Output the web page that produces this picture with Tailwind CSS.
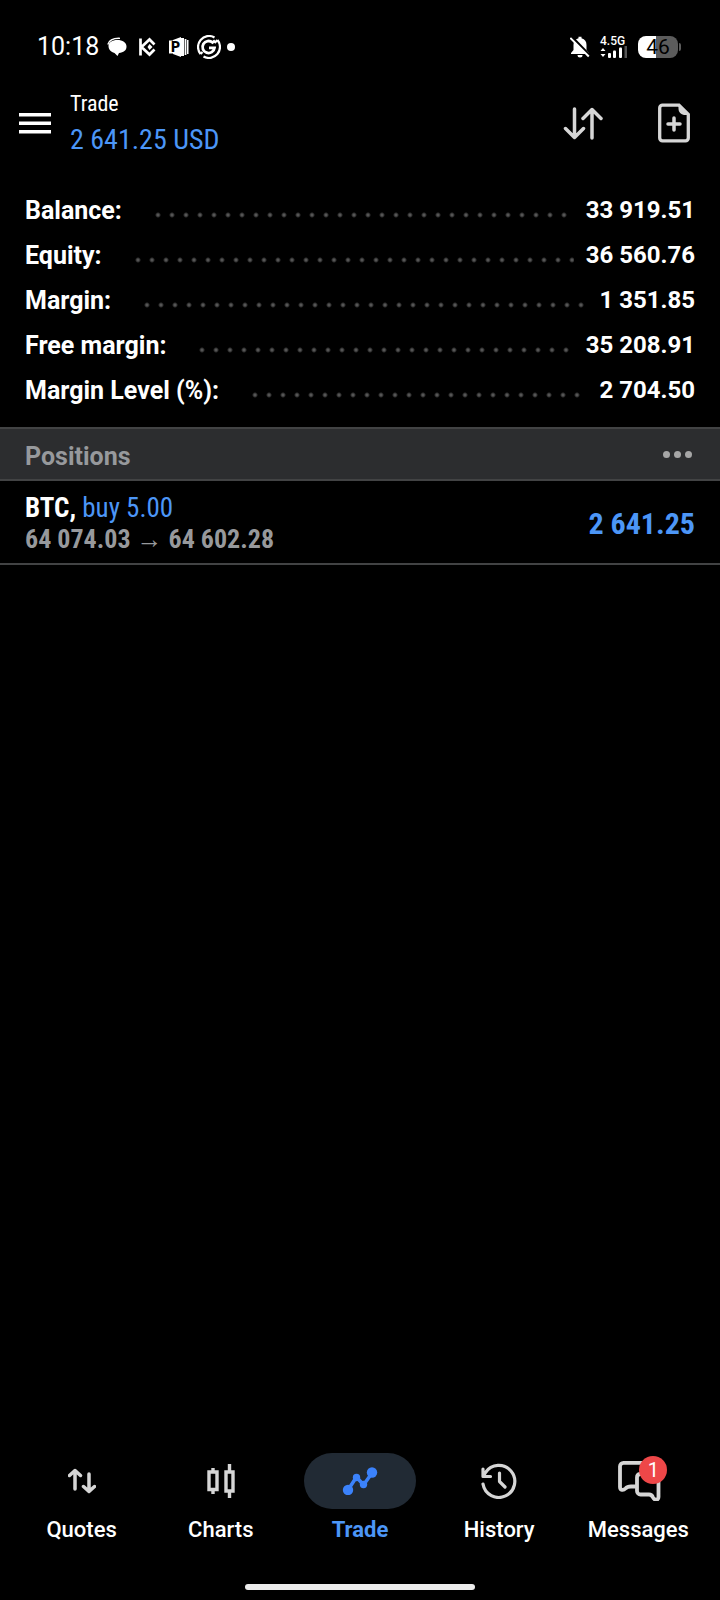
<!DOCTYPE html>
<html lang="en">
<head>
    <meta charset="UTF-8">
    <meta name="viewport" content="width=device-width, initial-scale=1.0">
    <title>Trade</title>
    <script src="https://cdn.jsdelivr.net/npm/@tailwindcss/browser@4"></script>
</head>
<body class="bg-black text-white min-h-screen flex flex-col font-['Roboto',sans-serif]">
    <!-- Status bar -->
    <div class="flex items-center justify-between pl-[37px] pr-[39px] pt-8 h-[62px]">
        <div class="flex items-center gap-2">
            <span class="text-[25px]">10:18</span>
            <svg class="w-5 h-5" viewBox="0 0 20 20">
                <path d="M10.500 3C15.500 3 19.500 5.500 19.500 9.500C19.500 13.500 16.500 15.500 12 16L10.500 19L7.500 16C4 15 1.500 12.500 1.500 9C1.500 5.500 5 3 10.500 3Z" fill="#fff"/>
                <path d="M.8 7.500C2 3.500 6 1 13 1.300" fill="none" stroke="#fff" stroke-width="1.300"/>
            </svg>
            <svg class="ml-1 w-[18px] h-5" viewBox="0 0 18 20" fill="none" stroke="#fff" stroke-width="2.700">
                <path d="M1.500 1.500V18.500M2.500 10L10.500 2.500L15.500 7.500M2.500 10L10.500 17.500L15.500 12.500"/>
                <path d="M10.500 7L13.500 10L10.500 13L8.500 10Z" fill="#fff" stroke="none"/>
            </svg>
            <svg class="ml-1 w-5 h-5" viewBox="0 0 20 20">
                <path d="M0 3.500H4V3L12 0V20L4 17V16.500H0Z" fill="#fff"/>
                <path d="M11 1H15V19H11ZM15.600 2H17.400V18H15.600ZM18 3H19.500V17H18Z" fill="#fff"/>
                <text x="2" y="15" font-family="Roboto" font-size="14" font-weight="900" fill="#000">P</text>
            </svg>
            <svg class="w-6 h-6" viewBox="0 0 24 24" fill="none" stroke="#fff" stroke-width="2.200">
                <path d="M17.500 2.500A11 11 0 0 0 3.500 19M6.500 21.500A11 11 0 0 0 20.500 5"/>
                <path d="M18 5.500L15.500 7.500A6 6 0 1 0 17.500 12.800H12" stroke-width="2.800"/>
                <path d="M20.500 5L17.500 8M3.500 19L5.500 17"/>
            </svg>
            <span class="w-2 h-2 -ml-[2px] rounded-full bg-white"></span>
        </div>
        <div class="flex items-center">
            <svg class="w-5 h-[22px]" viewBox="0 0 20 22">
                <path d="M8.500 2.200V.8H11.500V2.200C15 3 16.500 5.500 16.500 9V14L19 17V18H1V17L3.500 14V9C3.500 5.500 5 3 8.500 2.200Z" fill="#fff"/>
                <path d="M7.500 19H12.500A2.500 2.500 0 0 1 7.500 19Z" fill="#fff"/>
                <path d="M1 0L21 20.500" stroke="#000" stroke-width="2.500"/>
                <path d="M.3 2L18.800 20.500" stroke="#fff" stroke-width="2"/>
            </svg>
            <div class="ml-[10px] w-7">
                <div class="text-xs leading-[10px] font-medium">4.5G</div>
                <svg class="w-7 h-3" viewBox="0 0 28 12" fill="#fff">
                    <path d="M.5 5L3 2L5.500 5ZM.5 8L3 11L5.500 8Z"/>
                    <rect x="8" y="7" width="3" height="5" rx="1"/>
                    <rect x="13" y="4.500" width="3" height="7.500" rx="1"/>
                    <rect x="19" y="1.500" width="3" height="10.500" rx="1"/>
                    <rect x="24.500" y="0" width="2.500" height="12" fill="#555"/>
                </svg>
            </div>
            <div class="ml-[10px] w-10 h-[22px] rounded-lg bg-linear-to-r from-white from-45% to-[#5c5c5c] to-45% text-black text-[21px] leading-[23px] text-center">46</div>
            <div class="ml-px w-[2px] h-2 rounded-r bg-[#5c5c5c]"></div>
        </div>
    </div>

    <!-- Header -->
    <header class="flex items-center pl-[19px] pr-[30px] mt-[21px] h-20">
        <button type="button" aria-label="Menu">
            <svg class="w-8 h-6" viewBox="0 0 32 24" fill="#fff">
                <path d="M0 2h32v3.500H0zM0 10.500h32v3.500H0zM0 19h32v3.500H0z"/>
            </svg>
        </button>
        <div class="ml-[19px] pt-[2px] flex-1 font-['Roboto_Condensed','Liberation_Sans_Narrow',sans-serif]">
            <h1 class="text-[22px] leading-8">Trade</h1>
            <p class="text-[28px] leading-10 text-[#4c96f7]">2 641.25 USD</p>
        </div>
        <button type="button" aria-label="Sort">
            <svg class="w-10 h-9" viewBox="0 0 40 36" fill="none" stroke="#d6d6d6" stroke-width="3.500" stroke-linecap="round" stroke-linejoin="round">
                <path d="M11.500 4V32.500M2.500 23.500L11.500 32.500L20.500 23.500M29 33V4.500M20 13.500L29 4.500L38 13.500"/>
            </svg>
        </button>
        <button type="button" aria-label="New order" class="ml-[55px]">
            <svg class="w-8 h-10" viewBox="0 0 32 40" fill="none" stroke="#d6d6d6">
                <path d="M5 2.200H21L30.300 11.500V35A2.800 2.800 0 0 1 27.500 37.800H4.500A2.800 2.800 0 0 1 1.700 35V5A2.800 2.800 0 0 1 5 2.200Z" stroke-width="3.300"/>
                <path d="M20.500 2L31 12H26A6 6 0 0 1 20.500 6Z" fill="#d6d6d6" stroke="none"/>
                <path d="M16 15V27M10 21H22" stroke-width="3.500" stroke-linecap="round"/>
            </svg>
        </button>
    </header>

    <main class="flex-1">
        <!-- Account summary -->
        <dl class="px-[25px] pt-[25px] pb-[14px] text-[25px] leading-[45px] font-bold">
            <div class="flex items-center">
                <dt>Balance:</dt>
                <span class="flex-1 ml-[29px] mr-3 mt-2 h-[6px] bg-[radial-gradient(circle,#555_1px,transparent_3px)] bg-[length:14px_6px]"></span>
                <dd class="text-2xl leading-[45px]">33 919.51</dd>
            </div>
            <div class="flex items-center">
                <dt>Equity:</dt>
                <span class="flex-1 ml-[29px] mr-3 mt-2 h-[6px] bg-[radial-gradient(circle,#555_1px,transparent_3px)] bg-[length:14px_6px]"></span>
                <dd class="text-2xl leading-[45px]">36 560.76</dd>
            </div>
            <div class="flex items-center">
                <dt>Margin:</dt>
                <span class="flex-1 ml-[29px] mr-3 mt-2 h-[6px] bg-[radial-gradient(circle,#555_1px,transparent_3px)] bg-[length:14px_6px]"></span>
                <dd class="text-2xl leading-[45px]">1 351.85</dd>
            </div>
            <div class="flex items-center">
                <dt>Free margin:</dt>
                <span class="flex-1 ml-[29px] mr-3 mt-2 h-[6px] bg-[radial-gradient(circle,#555_1px,transparent_3px)] bg-[length:14px_6px]"></span>
                <dd class="text-2xl leading-[45px]">35 208.91</dd>
            </div>
            <div class="flex items-center">
                <dt>Margin Level (%):</dt>
                <span class="flex-1 ml-[29px] mr-3 mt-2 h-[6px] bg-[radial-gradient(circle,#555_1px,transparent_3px)] bg-[length:14px_6px]"></span>
                <dd class="text-2xl leading-[45px]">2 704.50</dd>
            </div>
        </dl>

        <!-- Positions -->
        <div class="flex items-center justify-between h-[54px] px-[25px] border-y-2 border-[#424344] bg-[#2c2d2f]">
            <h2 class="pt-[6px] text-[25px] font-bold text-[#97999c]">Positions</h2>
            <button type="button" aria-label="Position options" class="flex gap-1 pr-[3px]">
                <span class="w-[7px] h-[7px] rounded-full bg-[#a6a6a6]"></span>
                <span class="w-[7px] h-[7px] rounded-full bg-[#a6a6a6]"></span>
                <span class="w-[7px] h-[7px] rounded-full bg-[#a6a6a6]"></span>
            </button>
        </div>
        <div class="flex items-center justify-between h-[84px] px-[25px] pt-[3px] border-b-2 border-[#424344] font-['Roboto_Condensed','Liberation_Sans_Narrow',sans-serif]">
            <div class="text-[26px] leading-[31px]">
                <p class="text-[27px]"><span class="font-bold">BTC,</span> <span class="text-[#4c96f7]">buy 5.00</span></p>
                <p class="font-bold text-[#97999c]">64 074.03 → 64 602.28</p>
            </div>
            <p class="text-3xl font-bold text-[#4c96f7]">2 641.25</p>
        </div>
    </main>

    <!-- Bottom navigation -->
    <nav class="grid grid-cols-5 px-3 text-[22px] leading-8 font-medium text-center">
        <a href="#" class="flex flex-col items-center gap-[5px]">
            <span class="flex items-center justify-center w-28 h-14">
                <svg class="w-7 h-7" viewBox="0 0 28 28" fill="none" stroke="#d6d6d6" stroke-width="3.500" stroke-linecap="round" stroke-linejoin="round">
                    <path d="M7 22V3.500M1.500 8.500L7 3.500L12.500 8.500M21 7V24.500M15.500 19.500L21 24.500L26.500 19.500"/>
                </svg>
            </span>
            Quotes
        </a>
        <a href="#" class="flex flex-col items-center gap-[5px]">
            <span class="flex items-center justify-center w-28 h-14">
                <svg class="w-7 h-9" viewBox="0 0 28 36" fill="none" stroke="#d6d6d6" stroke-width="3.400">
                    <path d="M2 9H10V26.500H2ZM19 9H26V28H19ZM6 5V9M6 27V31M22.500 1V9M22.500 28V35"/>
                </svg>
            </span>
            Charts
        </a>
        <a href="#" class="flex flex-col items-center gap-[5px] font-bold text-[#4c96f7]">
            <span class="flex items-center justify-center w-28 h-14 rounded-full bg-[#212a34]">
                <svg class="w-9 h-7" viewBox="0 0 36 28" fill="#3b82fb">
                    <path d="M6 23L14.500 10L21.500 18L30 6" fill="none" stroke="#3b82fb" stroke-width="3.500"/>
                    <circle cx="6" cy="23" r="5.200"/>
                    <circle cx="14.500" cy="10.500" r="3.700"/>
                    <circle cx="21.500" cy="17.500" r="3.700"/>
                    <circle cx="30" cy="5.500" r="5.200"/>
                </svg>
            </span>
            Trade
        </a>
        <a href="#" class="flex flex-col items-center gap-[5px]">
            <span class="flex items-center justify-center w-28 h-14">
                <svg class="w-9 h-9" viewBox="0 0 36 36" fill="none" stroke="#d6d6d6" stroke-width="3.200" stroke-linecap="round" stroke-linejoin="round">
                    <path d="M2 21A16 16 0 1 0 4.500 9.500L2.500 13M2 6V13.500H9.500M18.500 10V18.500L24 24"/>
                </svg>
            </span>
            History
        </a>
        <a href="#" class="flex flex-col items-center gap-[5px]">
            <span class="relative flex items-center justify-center w-28 h-14">
                <svg class="ml-1 w-11 h-10" viewBox="0 0 44 40" fill="none" stroke="#d6d6d6" stroke-width="3.800" stroke-linejoin="round">
                    <path d="M37 12V4.500A3 3 0 0 0 34 1.900H5.500A3.500 3.500 0 0 0 2 5.300V26C2 29.500 5.500 29.500 7.500 27.500C9 25.800 11 25.500 13 25.500H19"/>
                    <path d="M22 13H37A3.500 3.500 0 0 1 40.500 16.500V36C40.500 39.500 36.500 39.500 35 36.500C34 34 33 33.500 31 33.500H22.500A3.500 3.500 0 0 1 19 30V16.500A3.500 3.500 0 0 1 22 13Z" fill="#000"/>
                </svg>
                <span class="absolute left-[57px] top-[3px] w-7 h-7 rounded-full bg-[#ee4748] text-xl leading-7 font-normal">1</span>
            </span>
            Messages
        </a>
    </nav>
    <!-- Home gesture bar -->
    <div class="mx-auto mt-[38px] mb-[10px] w-[32%] h-[6px] rounded-full bg-[#ededed]"></div>
</body>
</html>
